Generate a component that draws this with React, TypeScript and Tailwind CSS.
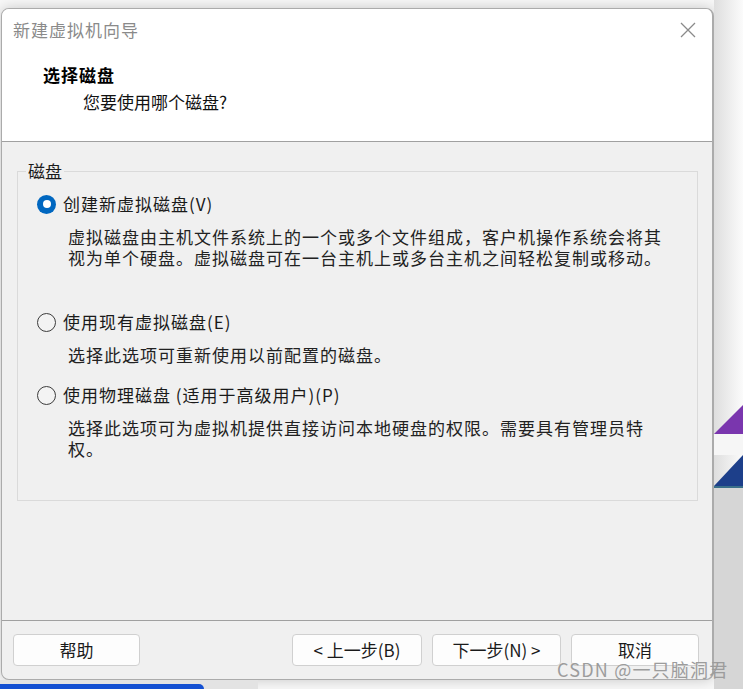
const font = "font-['Noto_Sans_CJK_SC','Noto_Sans',sans-serif]";

function Radio({ checked }: { checked?: boolean }) {
  if (checked) {
    return (
      <span className="flex h-[19px] w-[19px] shrink-0 items-center justify-center rounded-full bg-[#0067c0]">
        <span className="h-[8px] w-[8px] rounded-full bg-white" />
      </span>
    );
  }
  return <span className="h-[19px] w-[19px] shrink-0 rounded-full border border-[#3c3c3c] bg-[#f3f3f3]" />;
}

function Option({
  label,
  lines,
  checked,
  className,
}: {
  label: string;
  lines: string[];
  checked?: boolean;
  className?: string;
}) {
  return (
    <div className={className}>
      <div className="flex h-[24px] items-center gap-[7px] pl-[19px]">
        <Radio checked={checked} />
        <span className="text-[17px] leading-[24px] tracking-[1px] text-[#1a1a1a]">{label}</span>
      </div>
      <div className="mt-[10px] pl-[50px] text-[17px] leading-[21px] tracking-[1px] text-[#222]">
        {lines.map((l) => (
          <div key={l} className="whitespace-nowrap">
            {l}
          </div>
        ))}
      </div>
    </div>
  );
}

function Button({ children, w }: { children: string; w: string }) {
  return (
    <button
      className={`${w} flex h-[32px] items-center justify-center rounded-[4px] border border-[#d0d0d0] bg-[#fdfdfd] text-[17px] text-[#1a1a1a]`}
    >
      {children}
    </button>
  );
}

export default function App() {
  return (
    <div className={`${font} relative h-[689px] w-[743px] overflow-hidden bg-[#f8f8f8]`}>
      {/* desktop behind the window */}
      <svg className="absolute right-0 top-0" width="29" height="689" viewBox="0 0 29 689">
        <defs>
          <linearGradient id="sh" x1="0" x2="1" y1="0" y2="0">
            <stop offset="0" stopColor="#dedede" />
            <stop offset="1" stopColor="#fbfbfb" />
          </linearGradient>
        </defs>
        <rect width="29" height="689" fill="url(#sh)" />
        <polygon points="0,434 29,405 29,434" fill="#7a36ae" />
        <rect y="434" width="29" height="21" fill="#f6f6f6" />
        <polygon points="0,486 29,455 29,486" fill="#1d3f8a" />
        <rect y="486" width="29" height="2" fill="#3a6f8a" />
        <rect y="488" width="29" height="201" fill="#d6d6d6" />
      </svg>
      <div className="absolute bottom-0 left-0 h-[9px] w-[258px] bg-[#e3e3e3]" />
      <div className="absolute bottom-0 left-0 h-[5px] w-[204px] rounded-tr-[6px] bg-[#1450d2]" />

      <div className="pt-[8px]">
        <div className="ml-[1px] flex h-[672px] w-[713px] flex-col overflow-hidden rounded-[8px] border border-r-2 border-[#ababab] bg-[#f0f0f0] shadow-[0_0_14px_rgba(0,0,0,0.2)]">
          <div className="flex h-[42px] shrink-0 items-center justify-between bg-white pl-[11px] pr-[16px]">
            <span className="text-[17px] tracking-[1px] text-[#8a8a8a]">新建虚拟机向导</span>
            <svg width="16" height="16" viewBox="0 0 16 16">
              <path d="M1 1L15 15M15 1L1 15" stroke="#8a8a8a" strokeWidth="1.3" fill="none" />
            </svg>
          </div>
          <div className="h-[91px] shrink-0 border-b border-[#a0a0a0] bg-white pt-[12px]">
            <div className="pl-[41px] text-[17px] font-bold leading-[24px] tracking-[1px] text-black">选择磁盘</div>
            <div className="mt-[3px] pl-[81px] text-[17px] leading-[24px] text-[#111]">您要使用哪个磁盘?</div>
          </div>
          <div className="flex-1 pt-[19px]">
            <fieldset className="ml-[15px] mr-[14px] h-[340px] border border-[#dadada] pl-[8px]">
              <legend className="px-[2px] text-[17px] leading-[20px] text-[#1a1a1a]">磁盘</legend>
              <div className="-ml-[8px] pt-[11px]">
                <Option
                  checked
                  label="创建新虚拟磁盘(V)"
                  lines={[
                    "虚拟磁盘由主机文件系统上的一个或多个文件组成，客户机操作系统会将其",
                    "视为单个硬盘。虚拟磁盘可在一台主机上或多台主机之间轻松复制或移动。",
                  ]}
                />
                <Option
                  label="使用现有虚拟磁盘(E)"
                  lines={["选择此选项可重新使用以前配置的磁盘。"]}
                  className="mt-[42px]"
                />
                <Option
                  label="使用物理磁盘 (适用于高级用户)(P)"
                  lines={["选择此选项可为虚拟机提供直接访问本地硬盘的权限。需要具有管理员特", "权。"]}
                  className="mt-[18px]"
                />
              </div>
            </fieldset>
          </div>
          <div className="flex h-[59px] shrink-0 border-t border-[#a0a0a0] pl-[11px] pr-[13px] pt-[13px]">
            <Button w="w-[127px]">帮助</Button>
            <div className="flex-1" />
            <div className="flex gap-[10px]">
              <Button w="w-[130px]">{"< 上一步(B)"}</Button>
              <Button w="w-[129px]">{"下一步(N) >"}</Button>
              <Button w="w-[128px]">取消</Button>
            </div>
          </div>
        </div>
      </div>

      <div className="absolute left-[557px] top-[656px] text-[18px] leading-[26px] tracking-[1.2px] text-[#9c9c9c]">
        CSDN @一只脑洞君
      </div>
    </div>
  );
}
